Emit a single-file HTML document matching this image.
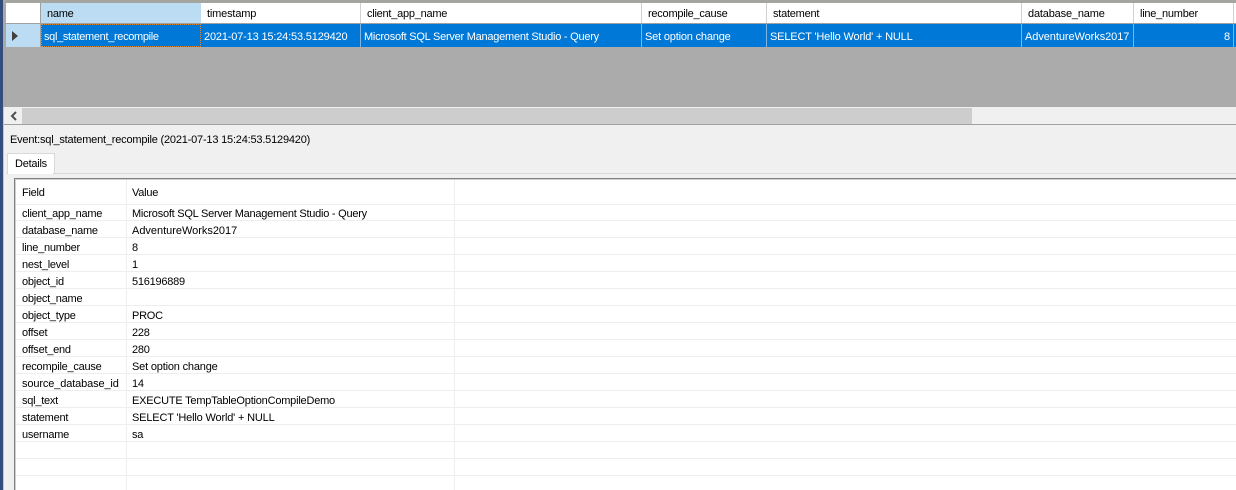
<!DOCTYPE html>
<html><head><meta charset="utf-8"><style>
html,body{margin:0;padding:0}
body{width:1236px;height:490px;overflow:hidden;position:relative;background:#f0f0f0;font:11px/16px "Liberation Sans",sans-serif;color:#000}
.a{position:absolute}
.t{position:absolute;white-space:nowrap;letter-spacing:-.24px;margin-top:1px}
.w{color:#fff}
.s{position:absolute;width:1px}
.l{position:absolute;left:16px;width:1220px;height:1px;background:#eeeeee}
.d{letter-spacing:-.17px}
.v{letter-spacing:-.02px}
</style></head><body>
<div class="a" style="left:0;top:0;width:3px;height:490px;background:#334d7c"></div>
<div class="a" style="left:3px;top:0;width:3px;height:107px;background:#a9a9a9"></div>
<div class="a" style="left:3px;top:107px;width:1px;height:383px;background:#c8c8c8"></div>
<div class="a" style="left:6px;top:0;width:1230px;height:3px;background:#a5a5a0"></div>
<div class="a" style="left:6px;top:3px;width:1230px;height:20px;background:#fff"></div>
<div class="a" style="left:41px;top:3px;width:160px;height:20px;background:#bcdcf4"></div>
<div class="a" style="left:6px;top:23px;width:1230px;height:1px;background:#a0a0a0"></div>
<div class="a" style="left:6px;top:24px;width:35px;height:24px;background:#bcdcf4"></div>
<div class="a" style="left:41px;top:24px;width:1195px;height:23px;background:#0078d7"></div>
<div class="a" style="left:6px;top:47px;width:1230px;height:60px;background:#ababab"></div>
<div class="a" style="left:4px;top:107px;width:1232px;height:1px;background:#f0f0f0"></div>
<div class="s" style="left:40px;top:3px;height:44px;background:#a0a0a0"></div>
<div class="s" style="left:360px;top:3px;height:20px;background:#d0d0d0"></div>
<div class="s" style="left:641px;top:3px;height:20px;background:#d0d0d0"></div>
<div class="s" style="left:766px;top:3px;height:20px;background:#d0d0d0"></div>
<div class="s" style="left:1021px;top:3px;height:20px;background:#d0d0d0"></div>
<div class="s" style="left:1133px;top:3px;height:20px;background:#d0d0d0"></div>
<div class="s" style="left:1233px;top:3px;height:20px;background:#d0d0d0"></div>
<div class="s" style="left:360px;top:24px;height:23px;background:#7fb5e2"></div>
<div class="s" style="left:641px;top:24px;height:23px;background:#7fb5e2"></div>
<div class="s" style="left:766px;top:24px;height:23px;background:#7fb5e2"></div>
<div class="s" style="left:1021px;top:24px;height:23px;background:#7fb5e2"></div>
<div class="s" style="left:1133px;top:24px;height:23px;background:#7fb5e2"></div>
<div class="s" style="left:1233px;top:24px;height:23px;background:#7fb5e2"></div>
<div class="a" style="left:41px;top:24px;width:158px;height:21px;border:1px dotted #d98a30"></div>
<svg class="a" style="left:11px;top:30px" width="8" height="12"><path d="M1 1L7 6L1 11Z" fill="#404040"/></svg>

<div class="t" style="left:47px;top:5px">name</div>
<div class="t d" style="left:207px;top:5px">timestamp</div>
<div class="t" style="left:367px;top:5px">client_app_name</div>
<div class="t" style="left:648px;top:5px">recompile_cause</div>
<div class="t" style="left:773px;top:5px">statement</div>
<div class="t d" style="left:1028px;top:5px">database_name</div>
<div class="t" style="left:1140px;top:5px">line_number</div>

<div class="t w" style="left:44px;top:28px;letter-spacing:-.33px">sql_statement_recompile</div>
<div class="t w d" style="left:204px;top:28px">2021-07-13 15:24:53.5129420</div>
<div class="t w" style="left:364px;top:28px">Microsoft SQL Server Management Studio - Query</div>
<div class="t w" style="left:645px;top:28px;letter-spacing:-.18px">Set option change</div>
<div class="t w d" style="left:770px;top:28px">SELECT 'Hello World' + NULL</div>
<div class="t w" style="left:1025px;top:28px;letter-spacing:-.07px">AdventureWorks2017</div>
<div class="t w" style="left:1224px;top:28px">8</div>

<div class="a" style="left:6px;top:108px;width:1230px;height:16px;background:#f0f0f0"></div>
<div class="a" style="left:22px;top:108px;width:950px;height:16px;background:#cdcdcd"></div>
<svg class="a" style="left:9px;top:110px" width="10" height="12"><path d="M7 2L3 6L7 10" fill="none" stroke="#505050" stroke-width="2"/></svg>
<div class="a" style="left:4px;top:124px;width:1232px;height:1px;background:#a0a0a0"></div>

<div class="t" style="left:10px;top:131px;letter-spacing:-.2px">Event:sql_statement_recompile (2021-07-13 15:24:53.5129420)</div>

<div class="a" style="left:7px;top:153px;width:46px;height:20px;background:#fff;border:1px solid #d9d9d9;border-bottom:0"></div>
<div class="t" style="left:15px;top:155px">Details</div>
<div class="a" style="left:6px;top:173px;width:1230px;height:1px;background:#d9d9d9"></div>
<div class="a" style="left:8px;top:173px;width:45px;height:1px;background:#fff"></div>

<div class="a" style="left:14px;top:178px;width:1222px;height:312px;background:#fff"></div>
<div class="a" style="left:14px;top:178px;width:1222px;height:1px;background:#808080"></div>
<div class="a" style="left:14px;top:179px;width:1222px;height:1px;background:#d0d0d0"></div>
<div class="a" style="left:14px;top:178px;width:1px;height:312px;background:#808080"></div>
<div class="a" style="left:15px;top:179px;width:1px;height:311px;background:#d0d0d0"></div>
<div class="s" style="left:126px;top:180px;height:310px;background:#eeeeee"></div>
<div class="s" style="left:454px;top:180px;height:310px;background:#eeeeee"></div>

<div class="t" style="left:22px;top:184px">Field</div>
<div class="t" style="left:132px;top:184px">Value</div>

<div class="l" style="top:204px"></div>
<div class="l" style="top:220px"></div>
<div class="l" style="top:237px"></div>
<div class="l" style="top:254px"></div>
<div class="l" style="top:271px"></div>
<div class="l" style="top:288px"></div>
<div class="l" style="top:305px"></div>
<div class="l" style="top:322px"></div>
<div class="l" style="top:339px"></div>
<div class="l" style="top:356px"></div>
<div class="l" style="top:373px"></div>
<div class="l" style="top:390px"></div>
<div class="l" style="top:407px"></div>
<div class="l" style="top:424px"></div>
<div class="l" style="top:441px"></div>
<div class="l" style="top:458px"></div>
<div class="l" style="top:475px"></div>

<div class="t" style="left:22px;top:205px">client_app_name</div><div class="t" style="left:132px;top:205px">Microsoft SQL Server Management Studio - Query</div>
<div class="t" style="left:22px;top:222px">database_name</div><div class="t v" style="left:132px;top:222px">AdventureWorks2017</div>
<div class="t" style="left:22px;top:239px">line_number</div><div class="t" style="left:132px;top:239px">8</div>
<div class="t" style="left:22px;top:256px">nest_level</div><div class="t" style="left:132px;top:256px">1</div>
<div class="t" style="left:22px;top:273px">object_id</div><div class="t" style="left:132px;top:273px">516196889</div>
<div class="t" style="left:22px;top:290px">object_name</div>
<div class="t" style="left:22px;top:307px">object_type</div><div class="t" style="left:132px;top:307px">PROC</div>
<div class="t" style="left:22px;top:324px">offset</div><div class="t" style="left:132px;top:324px">228</div>
<div class="t" style="left:22px;top:341px">offset_end</div><div class="t" style="left:132px;top:341px">280</div>
<div class="t" style="left:22px;top:358px">recompile_cause</div><div class="t" style="left:132px;top:358px;letter-spacing:-.18px">Set option change</div>
<div class="t" style="left:22px;top:375px;letter-spacing:-.13px">source_database_id</div><div class="t" style="left:132px;top:375px">14</div>
<div class="t" style="left:22px;top:392px">sql_text</div><div class="t" style="left:132px;top:392px;letter-spacing:-.21px">EXECUTE TempTableOptionCompileDemo</div>
<div class="t" style="left:22px;top:409px">statement</div><div class="t d" style="left:132px;top:409px">SELECT 'Hello World' + NULL</div>
<div class="t" style="left:22px;top:426px">username</div><div class="t" style="left:132px;top:426px">sa</div>
</body></html>
